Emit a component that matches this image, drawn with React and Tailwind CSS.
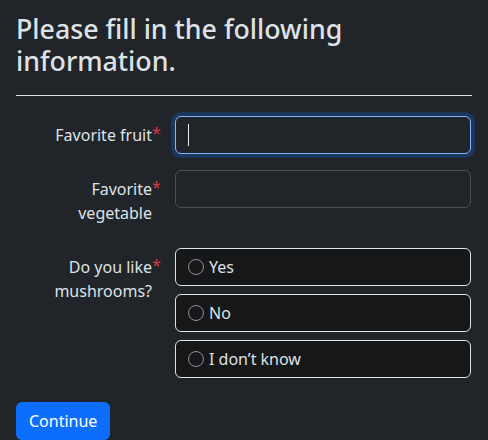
import React from "react";

function Label({ children }) {
  return (
    <div className="relative py-[7px] text-right leading-6 text-[16px]">
      {children}
      <span className="absolute left-full top-[5px] leading-6 text-[#dc3545]">*</span>
    </div>
  );
}

function Radio({ label }) {
  return (
    <div className="flex h-[38px] items-center rounded-md border border-[#dee2e6] bg-[#161719] pl-3">
      <span className="h-4 w-4 rounded-full border border-[#8e9094]" />
      <span className="ml-[5px] leading-6">{label}</span>
    </div>
  );
}

export default function App() {
  return (
    <div
      className="min-h-screen bg-[#212529] px-4 pt-[13px] text-[#dee2e6]"
      style={{ fontFamily: '"Noto Sans", sans-serif' }}
    >
      <h2 className="text-[26.75px] font-medium leading-[32.4px]">
        Please fill in the following information.
      </h2>
      <hr className="mt-[17px] border-0 border-t border-[#dee2e6]" />
      <form className="mt-[20px]">
        <div className="grid grid-cols-[136px_296px] gap-x-[23px]">
          <Label>Favorite fruit</Label>
          <div className="flex h-[38px] items-center rounded-md border border-[#86b7fe] pl-3 shadow-[0_0_0_4px_rgba(13,110,253,0.25)]">
            <span className="h-[22px] w-px bg-[#e9ecef]" />
          </div>
        </div>
        <div className="mt-4 grid grid-cols-[136px_296px] gap-x-[23px]">
          <Label>
            Favorite
            <br />
            vegetable
          </Label>
          <div className="h-[38px] rounded-md border border-[#495057]" />
        </div>
        <div className="mt-4 grid grid-cols-[136px_296px] gap-x-[23px]">
          <Label>
            Do you like
            <br />
            mushrooms?
          </Label>
          <div className="flex flex-col gap-2">
            <Radio label="Yes" />
            <Radio label="No" />
            <Radio label="I don’t know" />
          </div>
        </div>
        <button
          type="button"
          className="mt-6 h-[38px] rounded-md bg-[#0d6efd] px-[13px] leading-6 text-white"
        >
          Continue
        </button>
      </form>
    </div>
  );
}
